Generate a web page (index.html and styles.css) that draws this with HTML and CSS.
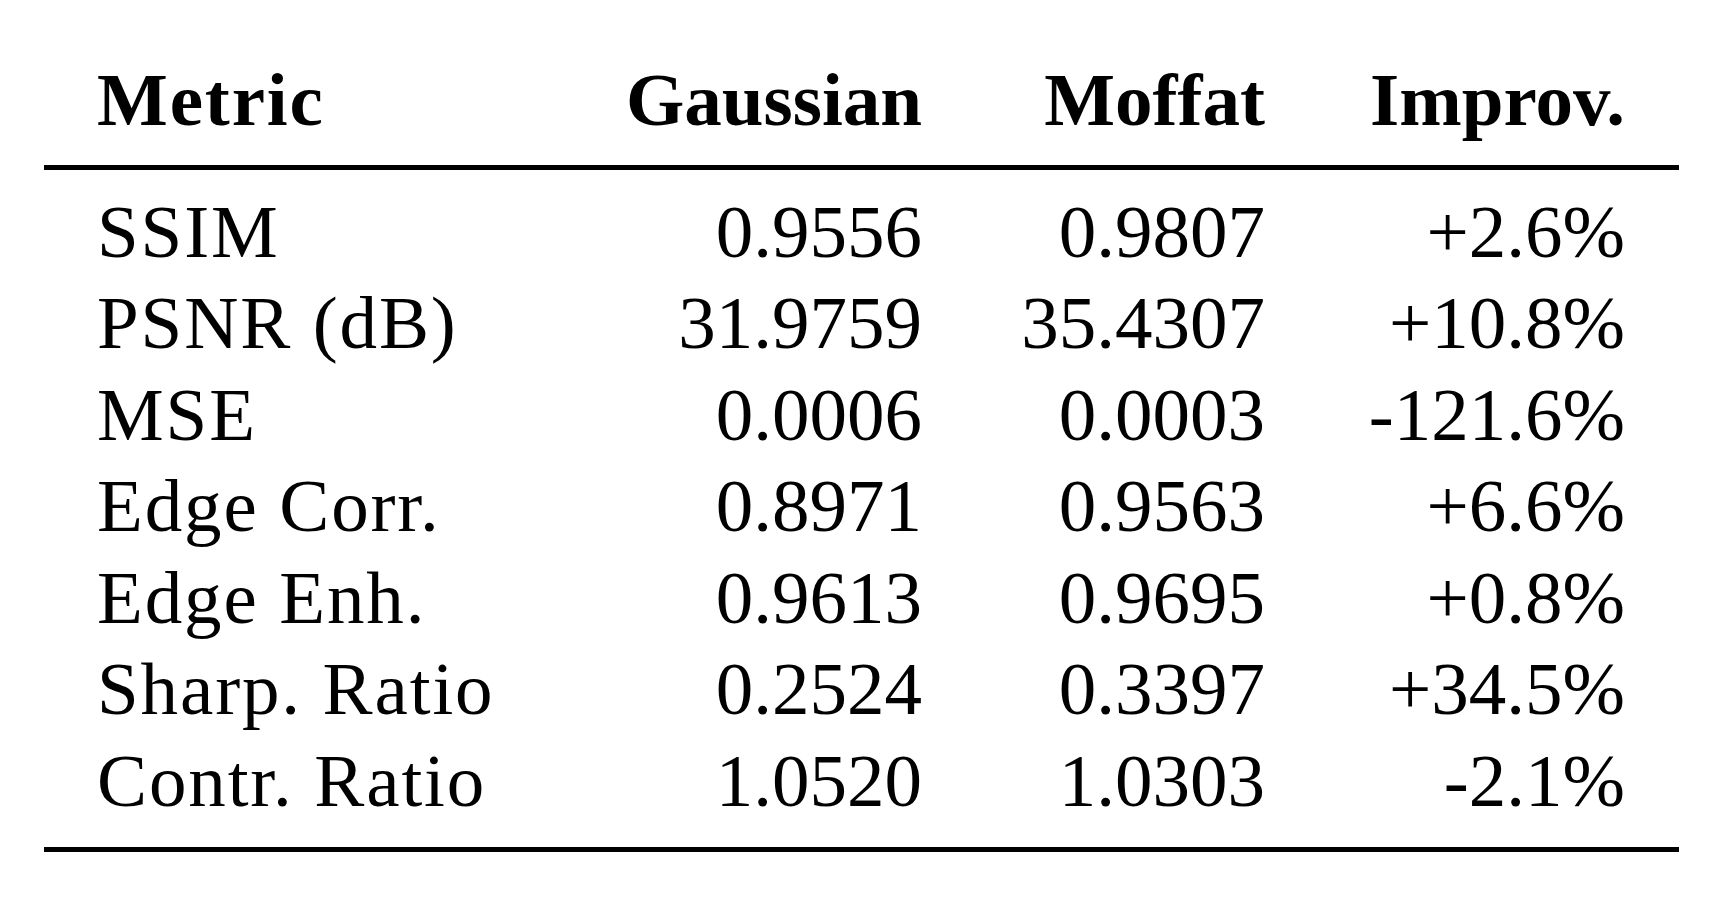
FILE: index.html
```
<!DOCTYPE html>
<html lang="en">
<head>
    <meta charset="UTF-8">
    <meta name="viewport" content="width=device-width, initial-scale=1.0">
    <title>Gaussian vs Moffat</title>
    <link rel="stylesheet" href="styles.css">
</head>
<body>

<table class="results">
    <colgroup>
        <col class="col-metric">
        <col class="col-gauss">
        <col class="col-moffat">
        <col class="col-improv">
    </colgroup>
    <thead>
        <tr>
            <th class="name">Metric</th>
            <th>Gaussian</th>
            <th>Moffat</th>
            <th class="last">Improv.</th>
        </tr>
    </thead>
    <tbody>
        <tr>
            <td class="name">SSIM</td>
            <td>0.9556</td>
            <td>0.9807</td>
            <td class="last">+2.6%</td>
        </tr>
        <tr>
            <td class="name">PSNR (dB)</td>
            <td>31.9759</td>
            <td>35.4307</td>
            <td class="last">+10.8%</td>
        </tr>
        <tr>
            <td class="name">MSE</td>
            <td>0.0006</td>
            <td>0.0003</td>
            <td class="last">-121.6%</td>
        </tr>
        <tr>
            <td class="name">Edge Corr.</td>
            <td>0.8971</td>
            <td>0.9563</td>
            <td class="last">+6.6%</td>
        </tr>
        <tr>
            <td class="name">Edge Enh.</td>
            <td>0.9613</td>
            <td>0.9695</td>
            <td class="last">+0.8%</td>
        </tr>
        <tr>
            <td class="name">Sharp. Ratio</td>
            <td>0.2524</td>
            <td>0.3397</td>
            <td class="last">+34.5%</td>
        </tr>
        <tr>
            <td class="name">Contr. Ratio</td>
            <td>1.0520</td>
            <td>1.0303</td>
            <td class="last">-2.1%</td>
        </tr>
    </tbody>
</table>

</body>
</html>
```

FILE: styles.css
```
body {
    margin: 0;
    padding: 0;
    background-color: #fff;
    color: #000;
    font-family: "Liberation Serif", "Times New Roman", serif;
}

.results {
    table-layout: fixed;
    width: 1635px;
    margin: 54px 0 0 44px;
    border-collapse: separate;
    border-spacing: 0;
    border-bottom: 5px solid #000;
    font-size: 75px;
    line-height: 91.5px;
}

.col-metric { width: 503px; }
.col-gauss { width: 375px; }
.col-moffat { width: 343px; }
.col-improv { width: 414px; }

.results th,
.results td {
    padding: 0;
    text-align: right;
    white-space: nowrap;
}

.results th {
    font-weight: bold;
    padding-bottom: 19px;
    border-bottom: 5px solid #000;
}

.results .name {
    text-align: left;
    padding-left: 53px;
    letter-spacing: 0.025em;
}

.results .last {
    padding-right: 54px;
}

.results tbody tr:first-child td {
    padding-top: 16px;
}

.results tbody tr:last-child td {
    padding-bottom: 21px;
}
```
